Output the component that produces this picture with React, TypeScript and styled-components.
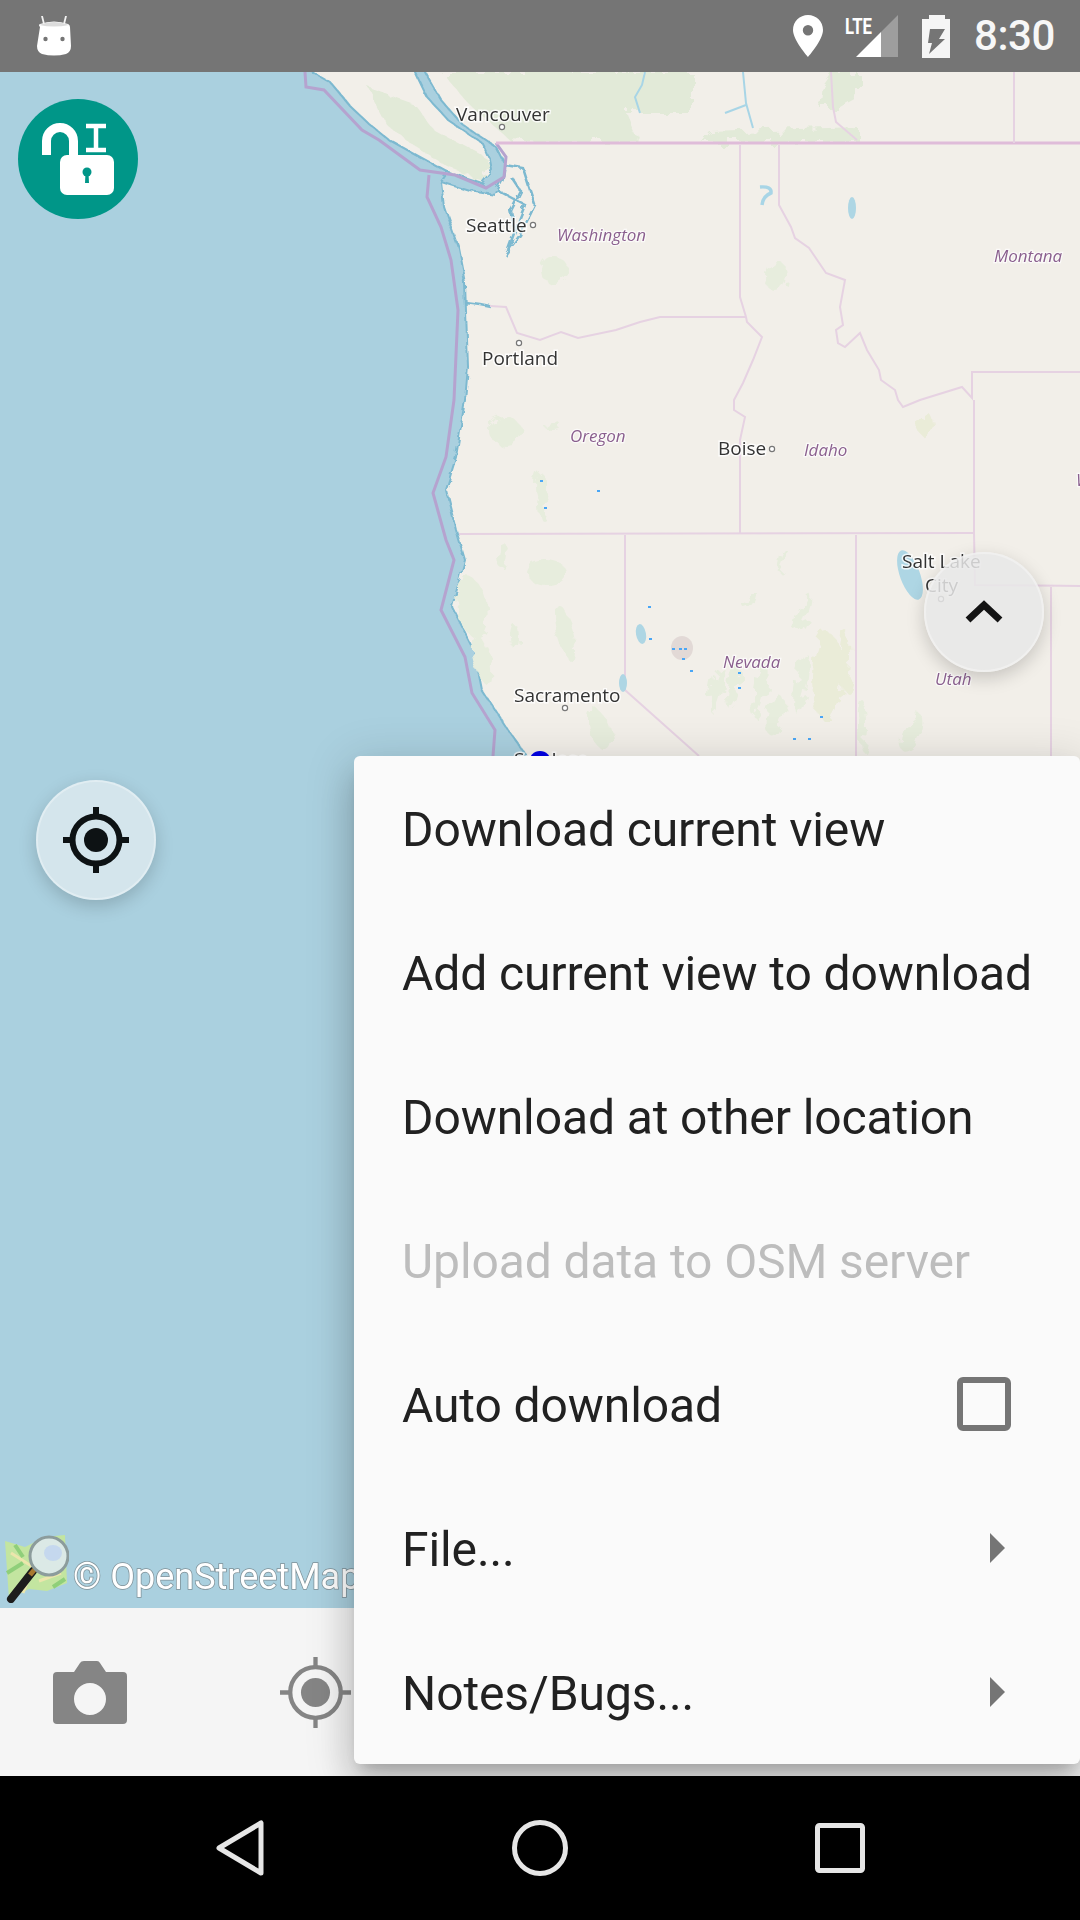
import styled, { createGlobalStyle } from "styled-components";

const GlobalStyle = createGlobalStyle`
  html, body {
    margin: 0;
    padding: 0;
    background: #000;
  }
  body {
    font-family: Roboto, "Liberation Sans", sans-serif;
  }
`;

const Screen = styled.div`
  position: relative;
  width: 1080px;
  height: 1920px;
  display: flex;
  flex-direction: column;
  overflow: hidden;
`;

/* status bar */
const StatusBar = styled.div`
  height: 72px;
  flex: none;
  background: #757575;
  display: flex;
  align-items: center;
  justify-content: space-between;
  padding: 0 25px 0 37px;
`;

const StatusIcons = styled.div`
  display: flex;
  align-items: center;
  gap: 24px;
`;

const PinSlot = styled.div`
  display: flex;
  margin-right: -2px;
`;

const Clock = styled.span`
  font-size: 42px;
  line-height: 42px;
  font-weight: 500;
  letter-spacing: -0.4px;
  color: #f7f7f7;
`;

const LteText = styled.text`
  font-family: "Liberation Sans Narrow", Roboto, sans-serif;
  font-size: 22px;
  font-weight: 700;
  fill: #fff;
`;

/* map */
const MapArea = styled.div`
  position: relative;
  flex: 1;
  background: #aad0df;
  overflow: hidden;
`;

const MapCanvas = styled.svg`
  display: block;
  width: 1080px;
  height: 1536px;
  filter: blur(0.6px);
`;

const CityLabel = styled.text`
  font-family: "Open Sans", "Noto Sans", sans-serif;
  font-size: 19px;
  fill: #333;
  stroke: #fff;
  stroke-width: 3px;
  stroke-opacity: 0.8;
  paint-order: stroke;
`;

const StateLabel = styled.text`
  font-family: "Open Sans", "Noto Sans", sans-serif;
  font-size: 17px;
  font-style: italic;
  fill: #8a5f8e;
  stroke: #fff;
  stroke-width: 2.5px;
  stroke-opacity: 0.7;
  paint-order: stroke;
`;

const LockButton = styled.div`
  position: absolute;
  left: 18px;
  top: 27px;
  width: 120px;
  height: 120px;
  border-radius: 50%;
  background: #009688;
`;

const RoundButton = styled.div<{ $left: number; $top: number; $tint: string }>`
  position: absolute;
  left: ${(p) => p.$left}px;
  top: ${(p) => p.$top}px;
  width: 120px;
  height: 120px;
  box-sizing: border-box;
  border-radius: 50%;
  background: ${(p) => p.$tint};
  border: 2px solid rgba(255, 255, 255, 0.3);
  box-shadow: 0 6px 18px rgba(0, 0, 0, 0.18);
  display: flex;
  align-items: center;
  justify-content: center;
`;

const Attribution = styled.div`
  position: absolute;
  left: 3px;
  bottom: 5px;
  display: flex;
  align-items: flex-end;
  gap: 4px;
  white-space: nowrap;
`;

const AttributionText = styled.span`
  font-size: 36px;
  line-height: 48px;
  margin-bottom: 2px;
  color: #fff;
  -webkit-text-stroke: 1.5px rgba(90, 90, 90, 0.55);
  paint-order: stroke fill;
`;

/* bottom action bar */
const ActionBar = styled.div`
  height: 168px;
  flex: none;
  background: #f5f5f5;
  display: flex;
  align-items: center;
  gap: 117px;
  padding-left: 36px;
`;

const ActionSlot = styled.div`
  width: 108px;
  display: flex;
  justify-content: center;
`;

/* popup menu */
const Menu = styled.div`
  position: absolute;
  top: 756px;
  right: 0;
  width: 726px;
  background: #fafafa;
  border-radius: 6px;
  box-shadow: 0 24px 38px 3px rgba(0, 0, 0, 0.14), 0 9px 46px 8px rgba(0, 0, 0, 0.12),
    0 11px 15px -7px rgba(0, 0, 0, 0.2);
`;

const MenuRow = styled.div<{ $disabled?: boolean }>`
  height: 144px;
  box-sizing: border-box;
  display: flex;
  align-items: center;
  justify-content: space-between;
  padding: 0 69px 0 48px;
  font-size: 48px;
  letter-spacing: -0.1px;
  color: ${(p) => (p.$disabled ? "#bdbdbd" : "#212121")};
  white-space: nowrap;
`;

const RowLabel = styled.span`
  position: relative;
  top: 1px;
`;

const CheckBox = styled.div`
  width: 54px;
  height: 54px;
  box-sizing: border-box;
  border: 6px solid #757575;
  border-radius: 6px;
`;

const SubArrow = styled.div`
  width: 0;
  height: 0;
  margin-right: 6px;
  border-left: 15px solid #757575;
  border-top: 15px solid transparent;
  border-bottom: 15px solid transparent;
`;

/* navigation bar */
const NavBar = styled.div`
  height: 144px;
  flex: none;
  background: #000;
  display: grid;
  grid-template-columns: repeat(3, 300px);
  padding: 0 90px;
  align-items: center;
  justify-items: center;
`;

const land =
  "M305,50 L312,72 331,83 351,107 368,123 389,140 420,157 448,172 441,182 444,207 458,247 465,283 468,367 465,400 456,457 446,490 456,530 465,560 452,607 474,650 482,690 508,730 530,760 L1120,800 L1120,50 Z";
const strait =
  "M405,55 L415,72 427,97 448,120 482,143 490,160 492,170 482,183 448,172 441,182 470,191 495,195 503,180 505,165 496,147 475,133 461,123 441,100 425,72 420,55 Z";
const maritime =
  "M305,72 L306,87 324,90 362,130 379,140 420,170 455,175 486,188 504,177 506,157 496,143";
const maritimeSouth =
  "M429,175 L427,197 441,227 451,260 458,310 454,400 446,457 433,493 446,540 454,560 441,610 465,657 472,693 495,730 493,756";

const pugetLines = [
  "M505,165 L523,168 530,190 535,205 520,235 505,255",
  "M497,190 L510,197 525,205 517,225 508,250",
  "M512,178 L520,190 510,210 514,228",
  "M465,302 L480,304 490,306",
];

const stateLines = [
  "M740,145 L740,297 746,317 747,322 762,337 753,360 743,383 734,400 734,410 745,417 740,440 740,533",
  "M746,317 L660,317 640,322 616,330 578,338 561,332 540,340 517,333 506,307 490,306",
  "M459,534 L975,533",
  "M625,535 L625,690 699,756",
  "M856,535 L856,756",
  "M974,400 L974,533 975,585 1080,586",
  "M1051,587 L1051,756",
  "M779,145 L779,205 791,227 795,238 809,248 826,273 845,280 840,307 843,325 836,330 838,343 845,347 860,333 867,350 879,370 881,380 895,390 898,400 903,407 920,400 962,387 972,398 972,372 1080,372",
  "M1014,72 L1014,143",
  "M831,72 L833,107 836,122 857,140",
];

const forestShapes = [
  "M368,87 L413,103 434,130 489,160 482,180 448,167 420,150 389,127 Z",
  "M441,72 L692,72 692,113 626,113 638,142 540,142 510,140 470,105 Z",
  "M702,142 L710,132 858,127 858,142 Z",
  "M819,107 L822,85 831,72 858,72 858,97 840,107 Z",
];

const blobs: [number, number, number, number, number][] = [
  [504, 430, 16, 14, 0],
  [541, 487, 5, 14, 0],
  [543, 507, 5, 13, 0],
  [472, 607, 15, 30, -10],
  [504, 557, 6, 13, 0],
  [547, 573, 20, 12, 0],
  [565, 633, 8, 30, -15],
  [515, 637, 4, 12, 0],
  [482, 660, 8, 26, -15],
  [717, 690, 6, 24, 10],
  [734, 687, 6, 22, 10],
  [760, 690, 6, 28, 10],
  [801, 683, 6, 30, 10],
  [803, 613, 5, 20, 20],
  [782, 560, 3, 12, 15],
  [912, 733, 10, 20, 25],
  [864, 727, 5, 25, 0],
  [776, 716, 7, 20, 15],
  [750, 600, 4, 10, 30],
  [776, 276, 11, 16, 0],
  [554, 270, 13, 14, 0],
  [552, 425, 9, 4, 0],
  [600, 730, 10, 22, -20],
];

const paleBlobs: [number, number, number, number, number][] = [
  [827, 677, 15, 45, 0],
  [845, 660, 7, 30, 0],
  [926, 425, 8, 12, 0],
];

const waterBlobs: [number, number, number, number, number][] = [
  [623, 683, 4, 9, 0],
  [641, 634, 5, 10, -10],
  [910, 575, 10, 26, -20],
  [852, 208, 4, 11, 0],
];

const rivers = [
  "M645,72 L642,85 635,97 640,113",
  "M743,72 L746,103 753,128",
  "M725,113 L746,105",
];

const specks: [number, number][] = [
  [597, 490], [544, 507], [649, 638], [672, 648], [679, 648], [684, 648], [682, 658], [738, 672],
  [738, 687], [690, 670], [780, 772], [793, 738], [808, 738], [820, 716], [540, 480], [648, 606],
];

const cities = [
  { name: "Vancouver", x: 456, y: 121 },
  { name: "Seattle", x: 466, y: 232 },
  { name: "Portland", x: 482, y: 365 },
  { name: "Boise", x: 718, y: 455 },
  { name: "Sacramento", x: 514, y: 702 },
  { name: "Salt Lake", x: 902, y: 568 },
  { name: "City", x: 925, y: 592 },
  { name: "San Jose", x: 514, y: 766 },
];

const states = [
  { name: "Washington", x: 557, y: 241 },
  { name: "Montana", x: 994, y: 262 },
  { name: "Oregon", x: 570, y: 442 },
  { name: "Idaho", x: 804, y: 456 },
  { name: "Nevada", x: 723, y: 668 },
  { name: "Utah", x: 935, y: 685 },
  { name: "Wyoming", x: 1076, y: 486 },
];

const townDots = [
  [502, 127], [533, 225], [519, 343], [772, 449], [565, 708], [941, 599],
];

function MapDrawing() {
  return (
    <MapCanvas viewBox="0 72 1080 1536">
      <defs>
        <filter id="coastEdge" x="-5%" y="-5%" width="110%" height="110%">
          <feTurbulence type="fractalNoise" baseFrequency="0.09" numOctaves="3" seed="4" />
          <feDisplacementMap in="SourceGraphic" scale="7" />
        </filter>
        <filter id="patchEdge" x="-5%" y="-5%" width="110%" height="110%">
          <feTurbulence type="fractalNoise" baseFrequency="0.07" numOctaves="3" seed="9" />
          <feDisplacementMap in="SourceGraphic" scale="18" />
        </filter>
      </defs>
      <path d={land} fill="#f2efe9" stroke="#7db9d0" strokeWidth="2" filter="url(#coastEdge)" />
      <g filter="url(#patchEdge)">
        {forestShapes.map((d) => (
          <path key={d} d={d} fill="#e2ead8" />
        ))}
        {blobs.map(([cx, cy, rx, ry, r]) => (
          <ellipse key={`${cx}-${cy}`} cx={cx} cy={cy} rx={rx} ry={ry} fill="#e7eddd" transform={`rotate(${r} ${cx} ${cy})`} />
        ))}
        {paleBlobs.map(([cx, cy, rx, ry, r]) => (
          <ellipse key={`${cx}-${cy}`} cx={cx} cy={cy} rx={rx} ry={ry} fill="#eaecd8" transform={`rotate(${r} ${cx} ${cy})`} />
        ))}
      </g>
      <g filter="url(#coastEdge)">
        <path d={strait} fill="#aad0df" stroke="#7db9d0" strokeWidth="2" />
        {pugetLines.map((d) => (
          <path key={d} d={d} fill="none" stroke="#7db9d0" strokeWidth="2.5" />
        ))}
      </g>
      <path d={maritime} fill="none" stroke="#b5a3cf" strokeWidth="3" />
      <path d={maritimeSouth} fill="none" stroke="#b5a3cf" strokeWidth="3" />
      <path d="M496,143 L1080,143" stroke="#dfbcd9" strokeWidth="3" />
      {stateLines.map((d) => (
        <path key={d} d={d} fill="none" stroke="#e6d2e2" strokeWidth="2" />
      ))}
      {rivers.map((d) => (
        <path key={d} d={d} fill="none" stroke="#a8d5e6" strokeWidth="2" />
      ))}
      <path d="M760,187 Q772,186 771,193 Q763,196 762,205" fill="none" stroke="#a8d5e6" strokeWidth="3.5" />
      {waterBlobs.map(([cx, cy, rx, ry, r]) => (
        <ellipse key={`${cx}-${cy}`} cx={cx} cy={cy} rx={rx} ry={ry} fill="#aed6e4" transform={`rotate(${r} ${cx} ${cy})`} />
      ))}
      <ellipse cx="682" cy="648" rx="11" ry="12" fill="#e2d9d6" />
      {specks.map(([x, y]) => (
        <rect key={`${x}-${y}`} x={x} y={y} width="3" height="2" fill="#4aa6f5" />
      ))}
      {townDots.map(([cx, cy]) => (
        <circle key={cx} cx={cx} cy={cy} r="2.6" fill="#fff" stroke="#777" strokeWidth="1.2" />
      ))}
      {cities.map((c) => (
        <CityLabel key={c.name} x={c.x} y={c.y}>
          {c.name}
        </CityLabel>
      ))}
      {states.map((s) => (
        <StateLabel key={s.name} x={s.x} y={s.y}>
          {s.name}
        </StateLabel>
      ))}
      <circle cx="540" cy="762" r="11" fill="#0000e6" />
    </MapCanvas>
  );
}

function AndroidIcon() {
  return (
    <svg width="34" height="40" viewBox="0 0 34 40">
      <path d="M7,8 L5,0 M27,8 L29,0" stroke="#f2f2f2" strokeWidth="1.8" strokeLinecap="round" />
      <path d="M3,11 Q1,9 3,8 Q17,3 31,8 Q33,9 33,11 L34,30 Q34,36 29,38 Q17,41 5,38 Q0,36 0,30 Z" fill="#fff" />
      <path d="M2,9 Q17,3 32,9 Q17,12 2,9 Z" fill="#dcdcdc" />
      <circle cx="8.5" cy="23" r="2.2" fill="#757575" />
      <circle cx="25.5" cy="23" r="2.2" fill="#757575" />
    </svg>
  );
}

function PinIcon() {
  return (
    <svg width="30" height="42" viewBox="0 0 30 42">
      <path
        fillRule="evenodd"
        d="M15,0 C6.7,0 0,6.6 0,15 C0,25 15,42 15,42 C15,42 30,25 30,15 C30,6.6 23.3,0 15,0 Z M15,10 A5.2,5.2 0 1 1 15,20.4 A5.2,5.2 0 1 1 15,10 Z"
        fill="#fff"
      />
    </svg>
  );
}

function SignalIcon() {
  return (
    <svg width="53" height="42" viewBox="0 0 53 42">
      <path d="M53,0 L53,42 L36,42 L36,17 Z" fill="#9e9e9e" />
      <path d="M36,17 L36,42 L11,42 Z" fill="#fff" />
      <LteText x="0" y="19" textLength="27" lengthAdjust="spacingAndGlyphs">
        LTE
      </LteText>
    </svg>
  );
}

function BatteryIcon() {
  return (
    <svg width="28" height="43" viewBox="0 0 28 43">
      <path
        fillRule="evenodd"
        d="M7,0 L23,0 L23,4 L28,4 L28,43 L0,43 L0,4 L7,4 Z M8,14 L6,28 L10,28 L7,39 L23,24 L17,24 L23,14 Z"
        fill="#f5f5f5"
      />
    </svg>
  );
}

function OpenLockIcon() {
  return (
    <svg width="120" height="120" viewBox="0 0 120 120">
      <path d="M28.5,56 V42 A13.5,13.5 0 0 1 55.5,42 V56" fill="none" stroke="#fff" strokeWidth="9" />
      <path d="M68,27 H88 M78,27 V51 M68,51 H88" fill="none" stroke="#fff" strokeWidth="4.5" />
      <rect x="42" y="56" width="54" height="40" rx="7" fill="#fff" />
      <circle cx="69" cy="73" r="4.5" fill="#009688" />
      <path d="M67.5,74 H70.5 L71,84 H67 Z" fill="#009688" />
    </svg>
  );
}

function LocateIcon({ size, color, ring, dot }: { size: number; color: string; ring: number; dot: number }) {
  return (
    <svg width={size} height={size} viewBox="0 0 66 66">
      <circle cx="33" cy="33" r="23.5" fill="none" stroke={color} strokeWidth={ring} />
      <circle cx="33" cy="33" r={dot} fill={color} />
      <path d="M33,0 V10 M33,56 V66 M0,33 H10 M56,33 H66" stroke={color} strokeWidth={ring} />
    </svg>
  );
}

function ChevronUp() {
  return (
    <svg width="40" height="24" viewBox="0 0 40 24">
      <path d="M4,20 L20,5 L36,20" fill="none" stroke="#141414" strokeWidth="7" />
    </svg>
  );
}

function OsmLogo() {
  return (
    <svg width="66" height="70" viewBox="0 0 66 70">
      <path d="M2,8 L22,14 L42,4 L62,2 L64,50 L44,58 L26,56 L6,66 Z" fill="#c3e5a0" />
      <path d="M8,20 L30,34 L20,60 M36,48 L58,40 M44,8 L34,26" fill="none" stroke="#ece6ac" strokeWidth="3" />
      <path d="M4,40 L20,30 M50,54 L62,46 M12,12 L20,24" fill="none" stroke="#8fcf7a" strokeWidth="4" />
      <path d="M30,38 L8,66" stroke="#1d1d1d" strokeWidth="8" strokeLinecap="round" />
      <path d="M32,36 L27,42" stroke="#a8782f" strokeWidth="5" />
      <circle cx="46" cy="23" r="19" fill="#dbe9e6" stroke="#8c9c9c" strokeWidth="3" />
      <ellipse cx="50" cy="20" rx="9" ry="8" fill="#c5d8ee" />
    </svg>
  );
}

function CameraIcon() {
  return (
    <svg width="74" height="63" viewBox="0 0 74 63">
      <path
        fillRule="evenodd"
        d="M4,11 L21,11 L27,2 Q28,0 31,0 L44,0 Q46,0 47,2 L53,11 L70,11 Q74,11 74,15 L74,59 Q74,63 70,63 L4,63 Q0,63 0,59 L0,15 Q0,11 4,11 Z M37,22 A16,16 0 1 0 37,54 A16,16 0 1 0 37,22 Z"
        fill="#858585"
      />
    </svg>
  );
}

function BackIcon() {
  return (
    <svg width="48" height="56" viewBox="0 0 48 56">
      <path d="M45,3 L45,53 L3,28 Z" fill="none" stroke="#e6e6e6" strokeWidth="5" strokeLinejoin="round" />
    </svg>
  );
}

function HomeIcon() {
  return (
    <svg width="56" height="56" viewBox="0 0 56 56">
      <circle cx="28" cy="28" r="25.5" fill="none" stroke="#e6e6e6" strokeWidth="5" />
    </svg>
  );
}

function RecentIcon() {
  return (
    <svg width="50" height="50" viewBox="0 0 50 50">
      <rect x="2.5" y="2.5" width="45" height="45" rx="2" fill="none" stroke="#e6e6e6" strokeWidth="5" />
    </svg>
  );
}

export default function App() {
  return (
    <>
      <GlobalStyle />
      <Screen>
        <StatusBar>
          <AndroidIcon />
          <StatusIcons>
            <PinSlot>
              <PinIcon />
            </PinSlot>
            <SignalIcon />
            <BatteryIcon />
            <Clock>8:30</Clock>
          </StatusIcons>
        </StatusBar>

        <MapArea>
          <MapDrawing />
          <LockButton>
            <OpenLockIcon />
          </LockButton>
          <RoundButton $left={36} $top={708} $tint="rgba(245, 245, 245, 0.55)">
            <LocateIcon size={66} color="#0d1214" ring={6} dot={12} />
          </RoundButton>
          <RoundButton $left={924} $top={480} $tint="rgba(232, 232, 232, 0.85)">
            <ChevronUp />
          </RoundButton>
          <Attribution>
            <OsmLogo />
            <AttributionText>© OpenStreetMap</AttributionText>
          </Attribution>
        </MapArea>

        <ActionBar>
          <ActionSlot>
            <CameraIcon />
          </ActionSlot>
          <ActionSlot>
            <LocateIcon size={71} color="#858585" ring={4} dot={13.5} />
          </ActionSlot>
        </ActionBar>

        <NavBar>
          <BackIcon />
          <HomeIcon />
          <RecentIcon />
        </NavBar>

        <Menu>
          <MenuRow>
            <RowLabel>Download current view</RowLabel>
          </MenuRow>
          <MenuRow>
            <RowLabel>Add current view to download</RowLabel>
          </MenuRow>
          <MenuRow>
            <RowLabel>Download at other location</RowLabel>
          </MenuRow>
          <MenuRow $disabled>
            <RowLabel>Upload data to OSM server</RowLabel>
          </MenuRow>
          <MenuRow>
            <RowLabel>Auto download</RowLabel>
            <CheckBox />
          </MenuRow>
          <MenuRow>
            <RowLabel>File...</RowLabel>
            <SubArrow />
          </MenuRow>
          <MenuRow>
            <RowLabel>Notes/Bugs...</RowLabel>
            <SubArrow />
          </MenuRow>
        </Menu>
      </Screen>
    </>
  );
}
